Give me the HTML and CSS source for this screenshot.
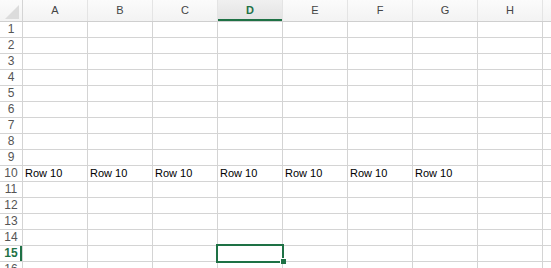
FILE: index.html
```html
<!DOCTYPE html>
<html>
<head>
<meta charset="utf-8">
<link rel="stylesheet" href="styles.css">
</head>
<body>
<div class="sheet">
  <div class="row head">
    <div class="rh corner"><span class="tri"></span></div>
    <div class="ch">A</div><div class="ch">B</div><div class="ch">C</div><div class="ch sel">D</div>
    <div class="ch">E</div><div class="ch">F</div><div class="ch">G</div><div class="ch">H</div><div class="ch rest"></div>
  </div>
  <div class="row"><div class="rh">1</div><div class="c"></div><div class="c"></div><div class="c"></div><div class="c"></div><div class="c"></div><div class="c"></div><div class="c"></div><div class="c"></div><div class="c rest"></div></div>
  <div class="row"><div class="rh">2</div><div class="c"></div><div class="c"></div><div class="c"></div><div class="c"></div><div class="c"></div><div class="c"></div><div class="c"></div><div class="c"></div><div class="c rest"></div></div>
  <div class="row"><div class="rh">3</div><div class="c"></div><div class="c"></div><div class="c"></div><div class="c"></div><div class="c"></div><div class="c"></div><div class="c"></div><div class="c"></div><div class="c rest"></div></div>
  <div class="row"><div class="rh">4</div><div class="c"></div><div class="c"></div><div class="c"></div><div class="c"></div><div class="c"></div><div class="c"></div><div class="c"></div><div class="c"></div><div class="c rest"></div></div>
  <div class="row"><div class="rh">5</div><div class="c"></div><div class="c"></div><div class="c"></div><div class="c"></div><div class="c"></div><div class="c"></div><div class="c"></div><div class="c"></div><div class="c rest"></div></div>
  <div class="row"><div class="rh">6</div><div class="c"></div><div class="c"></div><div class="c"></div><div class="c"></div><div class="c"></div><div class="c"></div><div class="c"></div><div class="c"></div><div class="c rest"></div></div>
  <div class="row"><div class="rh">7</div><div class="c"></div><div class="c"></div><div class="c"></div><div class="c"></div><div class="c"></div><div class="c"></div><div class="c"></div><div class="c"></div><div class="c rest"></div></div>
  <div class="row"><div class="rh">8</div><div class="c"></div><div class="c"></div><div class="c"></div><div class="c"></div><div class="c"></div><div class="c"></div><div class="c"></div><div class="c"></div><div class="c rest"></div></div>
  <div class="row"><div class="rh">9</div><div class="c"></div><div class="c"></div><div class="c"></div><div class="c"></div><div class="c"></div><div class="c"></div><div class="c"></div><div class="c"></div><div class="c rest"></div></div>
  <div class="row"><div class="rh">10</div><div class="c">Row 10</div><div class="c">Row 10</div><div class="c">Row 10</div><div class="c">Row 10</div><div class="c">Row 10</div><div class="c">Row 10</div><div class="c">Row 10</div><div class="c"></div><div class="c rest"></div></div>
  <div class="row"><div class="rh">11</div><div class="c"></div><div class="c"></div><div class="c"></div><div class="c"></div><div class="c"></div><div class="c"></div><div class="c"></div><div class="c"></div><div class="c rest"></div></div>
  <div class="row"><div class="rh">12</div><div class="c"></div><div class="c"></div><div class="c"></div><div class="c"></div><div class="c"></div><div class="c"></div><div class="c"></div><div class="c"></div><div class="c rest"></div></div>
  <div class="row"><div class="rh">13</div><div class="c"></div><div class="c"></div><div class="c"></div><div class="c"></div><div class="c"></div><div class="c"></div><div class="c"></div><div class="c"></div><div class="c rest"></div></div>
  <div class="row"><div class="rh">14</div><div class="c"></div><div class="c"></div><div class="c"></div><div class="c"></div><div class="c"></div><div class="c"></div><div class="c"></div><div class="c"></div><div class="c rest"></div></div>
  <div class="row"><div class="rh active">15</div><div class="c"></div><div class="c"></div><div class="c"></div><div class="c cur"><span class="box"></span><span class="handle"></span></div><div class="c"></div><div class="c"></div><div class="c"></div><div class="c"></div><div class="c rest"></div></div>
  <div class="row"><div class="rh">16</div><div class="c"></div><div class="c"></div><div class="c"></div><div class="c"></div><div class="c"></div><div class="c"></div><div class="c"></div><div class="c"></div><div class="c rest"></div></div>
</div>
</body>
</html>
```

FILE: styles.css
```css
html, body {
  margin: 0;
  padding: 0;
  background: #ffffff;
  overflow: hidden;
}
.sheet {
  width: 551px;
  height: 268px;
  overflow: hidden;
  font-family: "Liberation Sans", Arial, sans-serif;
}
.row {
  display: flex;
  height: 15px;
  border-bottom: 1px solid #d4d4d4;
}
.row.head {
  height: 21px;
  border-bottom: 1px solid #cfcfcf;
  background: linear-gradient(#fbfbfb, #f3f3f3);
}
.rh {
  flex: none;
  width: 22px;
  border-right: 1px solid #d4d4d4;
  font-size: 12px;
  line-height: 15px;
  text-align: center;
  color: #555555;
  position: relative;
}
.rh.active {
  color: #1e7145;
  font-weight: bold;
  box-shadow: inset -2px 0 0 #1e7145;
}
.rh.corner {
  border-right: 1px solid #d4d4d4;
}
.tri {
  position: absolute;
  right: 3px;
  bottom: 2px;
  width: 0;
  height: 0;
  border-left: 14px solid transparent;
  border-bottom: 14px solid #dcdcdc;
}
.ch {
  flex: none;
  width: 64px;
  border-right: 1px solid #e4e4e4;
  font-size: 11px;
  line-height: 21px;
  text-align: center;
  color: #444444;
}
.ch.sel {
  background: linear-gradient(#f0f0f0, #e2e2e2);
  color: #1e7145;
  font-weight: bold;
  box-shadow: inset 0 -2px 0 #1e7145;
}
.c {
  flex: none;
  width: 64px;
  border-right: 1px solid #d4d4d4;
  font-size: 11px;
  line-height: 15px;
  padding-left: 2px;
  box-sizing: content-box;
  width: 62px;
  color: #000000;
  white-space: nowrap;
  position: relative;
}
.c.rest, .ch.rest {
  flex: 1;
  border-right: none;
}
.c.cur {
  overflow: visible;
}
.box {
  position: absolute;
  left: -2px;
  top: -2px;
  width: 64px;
  height: 15px;
  border: 2px solid #1e7145;
  z-index: 2;
}
.handle {
  position: absolute;
  left: 62px;
  top: 12px;
  width: 5px;
  height: 5px;
  background: #1e7145;
  border-left: 1px solid #fff;
  border-top: 1px solid #fff;
  z-index: 3;
}
```
